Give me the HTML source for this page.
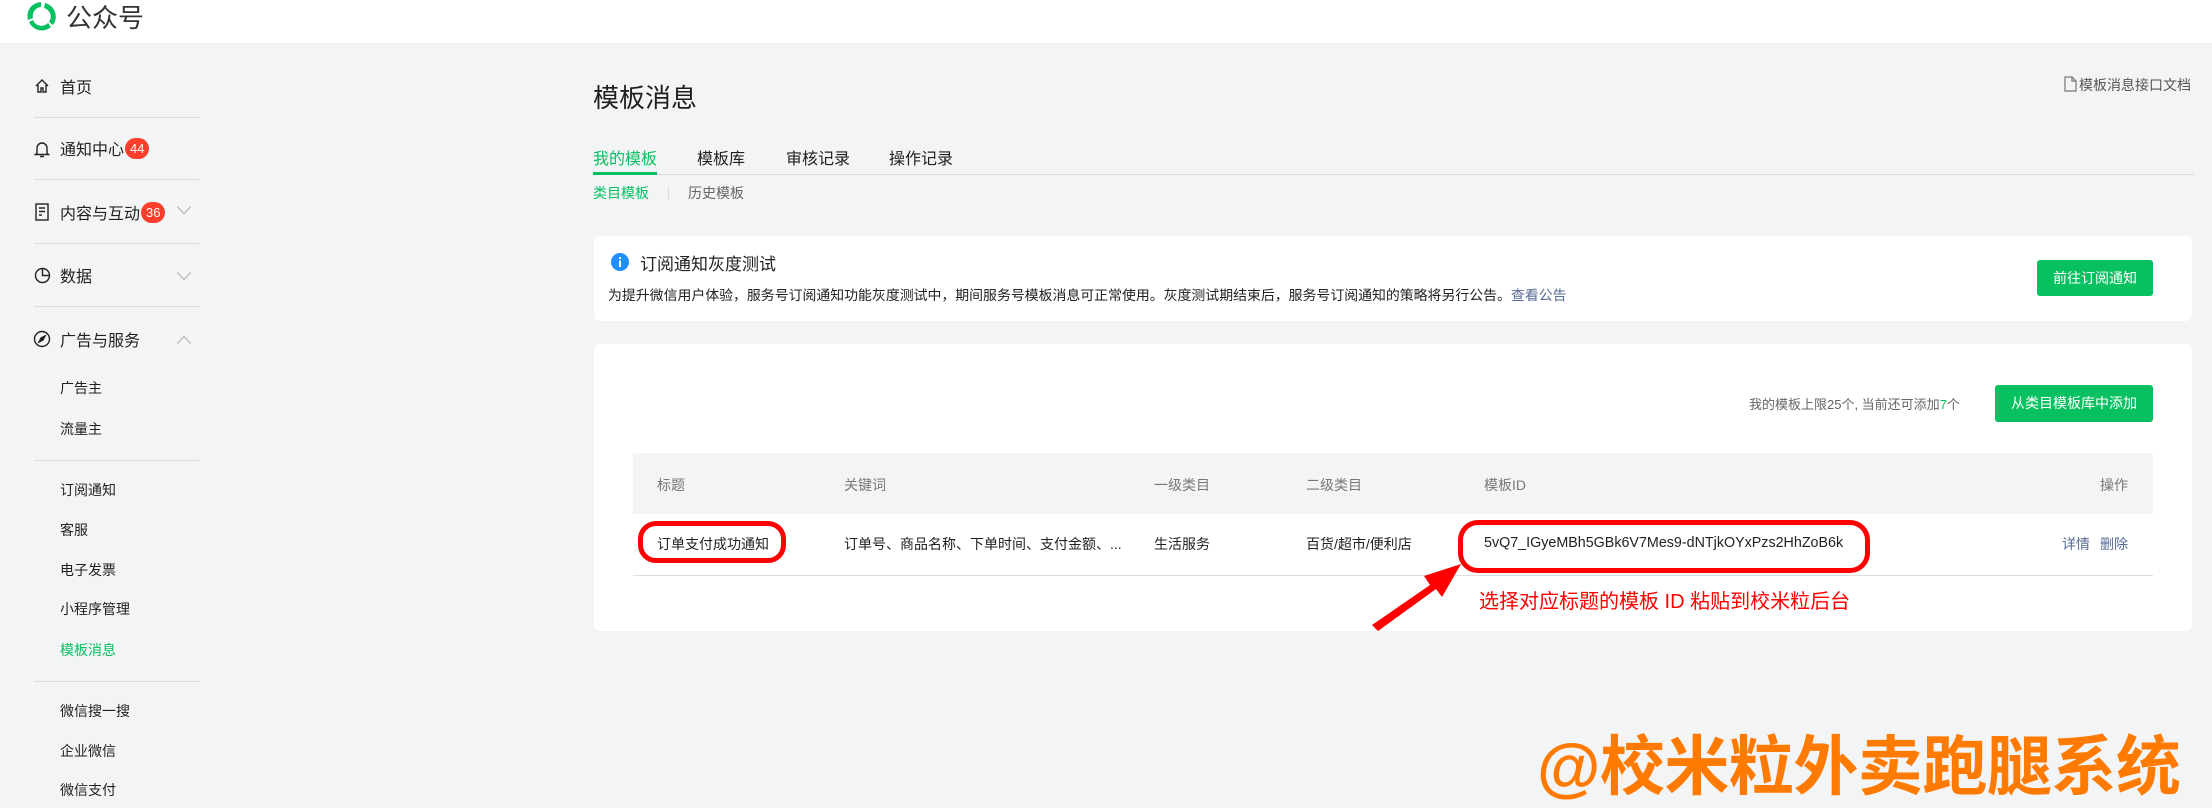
<!DOCTYPE html>
<html><head><meta charset="utf-8"><style>
*{margin:0;padding:0;box-sizing:border-box}
body{width:2212px;height:808px;overflow:hidden;background:#f3f4f6;font-family:"Liberation Sans","Noto Sans CJK SC",sans-serif;color:#1f1f1f;position:relative}
.abs{position:absolute;white-space:nowrap}
.hdr{position:absolute;left:0;top:0;width:2212px;height:43px;background:#fff}
.nav{font-size:16px;color:#222}
.sub{font-size:14px;color:#222}
.div{position:absolute;left:34px;width:165px;height:1px;background:#dcdcdc}
.badge{display:inline-block;background:#fa3e2c;color:#fff;font-size:13px;border-radius:11px;height:21px;line-height:21px;padding:0 5px;vertical-align:2px;margin-left:1px}
.chev{position:absolute;width:10px;height:10px;border-right:1px solid #aaa;border-bottom:1px solid #aaa}
.card{position:absolute;background:#fff;border-radius:6px}
.btn{position:absolute;background:#07c160;color:#fff;font-size:14px;border-radius:3px;text-align:center}
.th{font-size:14px;color:#777}
.td{font-size:14px;color:#222}
.red{position:absolute;border:5px solid #f00;border-radius:20px}
</style></head><body>
<div class="hdr"></div>
<svg class="abs" style="left:23px;top:0" width="36" height="32" viewBox="0 0 36 32">
<path d="M18 2 A14 14 0 0 0 5 20 L10 18 A9 9 0 0 1 18 7 Z" fill="#07c160"/>
<path d="M6 22 A14 14 0 0 0 28 27 L25 23 A9 9 0 0 1 10 20 Z" fill="#07c160"/>
<path d="M30 25 A14 14 0 0 0 22 3 L21 8 A9 9 0 0 1 26 22 Z" fill="#07c160"/>
</svg>
<div class="abs" style="left:66px;top:-2px;font-size:26px;color:#333">公众号</div>

<svg class="abs" style="left:34px;top:78px" width="16" height="16" viewBox="0 0 16 16" fill="none" stroke="#222" stroke-width="1.4"><path d="M2 8 L8 2 L14 8 M4 7 V14 H7 V10 H9 V14 H12 V7"/></svg>
<div class="abs nav" style="left:60px;top:74px">首页</div>
<div class="div" style="top:117px"></div>
<svg class="abs" style="left:34px;top:140px" width="16" height="18" viewBox="0 0 16 18" fill="none" stroke="#222" stroke-width="1.4"><path d="M3 13 V8 A5 5 0 0 1 13 8 V13 L14.5 14.5 H1.5 Z M6 16.5 H10"/></svg>
<div class="abs nav" style="left:60px;top:136px">通知中心<span class="badge">44</span></div>
<div class="div" style="top:179px"></div>
<svg class="abs" style="left:35px;top:203px" width="14" height="18" viewBox="0 0 14 18" fill="none" stroke="#222" stroke-width="1.4"><rect x="1" y="1" width="12" height="16"/><path d="M4 5 H10 M4 8.5 H10 M4 12 H7"/></svg>
<div class="abs nav" style="left:60px;top:200px">内容与互动<span class="badge">36</span></div>
<div class="chev" style="left:179px;top:202px;transform:rotate(45deg)"></div>
<div class="div" style="top:243px"></div>
<svg class="abs" style="left:34px;top:267px" width="17" height="17" viewBox="0 0 17 17" fill="none" stroke="#222" stroke-width="1.4"><circle cx="8.5" cy="8.5" r="7"/><path d="M8.5 1.5 V8.5 H15.5"/></svg>
<div class="abs nav" style="left:60px;top:263px">数据</div>
<div class="chev" style="left:179px;top:268px;transform:rotate(45deg)"></div>
<div class="div" style="top:306px"></div>
<svg class="abs" style="left:33px;top:330px" width="18" height="18" viewBox="0 0 18 18" fill="none" stroke="#222" stroke-width="1.4"><circle cx="9" cy="9" r="7.5"/><path d="M12 6 L8 8 L6 12 L10 10 Z" fill="#222"/></svg>
<div class="abs nav" style="left:60px;top:327px">广告与服务</div>
<div class="chev" style="left:179px;top:338px;transform:rotate(225deg)"></div>
<div class="abs sub" style="left:60px;top:378px">广告主</div>
<div class="abs sub" style="left:60px;top:419px">流量主</div>
<div class="div" style="top:460px"></div>
<div class="abs sub" style="left:60px;top:480px">订阅通知</div>
<div class="abs sub" style="left:60px;top:520px">客服</div>
<div class="abs sub" style="left:60px;top:560px">电子发票</div>
<div class="abs sub" style="left:60px;top:599px">小程序管理</div>
<div class="abs sub" style="left:60px;top:640px;color:#07c160">模板消息</div>
<div class="div" style="top:681px"></div>
<div class="abs sub" style="left:60px;top:701px">微信搜一搜</div>
<div class="abs sub" style="left:60px;top:741px">企业微信</div>
<div class="abs sub" style="left:60px;top:780px">微信支付</div>

<div class="abs" style="left:593px;top:78px;font-size:26px;color:#1f1f1f">模板消息</div>
<svg class="abs" style="left:2064px;top:76px" width="13" height="16" viewBox="0 0 13 16" fill="none" stroke="#777" stroke-width="1.2"><path d="M1 1 H8 L12 5 V15 H1 Z M8 1 V5 H12"/></svg>
<div class="abs" style="left:2079px;top:75px;font-size:14px;color:#555">模板消息接口文档</div>

<div class="abs" style="left:593px;top:145px;font-size:16px;color:#07c160">我的模板</div>
<div class="abs" style="left:697px;top:145px;font-size:16px">模板库</div>
<div class="abs" style="left:786px;top:145px;font-size:16px">审核记录</div>
<div class="abs" style="left:889px;top:145px;font-size:16px">操作记录</div>
<div class="abs" style="left:593px;top:174px;width:1601px;height:1px;background:#d9d9d9"></div>
<div class="abs" style="left:593px;top:172px;width:64px;height:3px;background:#07c160"></div>
<div class="abs" style="left:593px;top:183px;font-size:14px;color:#07c160">类目模板</div>
<div class="abs" style="left:668px;top:186px;width:1px;height:14px;background:#ddd"></div>
<div class="abs" style="left:688px;top:183px;font-size:14px;color:#666">历史模板</div>

<div class="card" style="left:594px;top:236px;width:1598px;height:85px"></div>
<svg class="abs" style="left:611px;top:253px" width="18" height="18" viewBox="0 0 18 18"><circle cx="9" cy="9" r="9" fill="#1e90ff"/><rect x="8" y="7.5" width="2" height="6.5" fill="#fff"/><rect x="8" y="4" width="2" height="2" fill="#fff"/></svg>
<div class="abs" style="left:640px;top:250px;font-size:17px;color:#222">订阅通知灰度测试</div>
<div class="abs" style="left:608px;top:285px;font-size:13.9px;color:#222">为提升微信用户体验，服务号订阅通知功能灰度测试中，期间服务号模板消息可正常使用。灰度测试期结束后，服务号订阅通知的策略将另行公告。<span style="color:#576b95">查看公告</span></div>
<div class="btn" style="left:2037px;top:260px;width:116px;height:36px;line-height:36px">前往订阅通知</div>

<div class="card" style="left:594px;top:344px;width:1598px;height:287px"></div>
<div class="abs" style="left:1749px;top:394px;font-size:13px;color:#666">我的模板上限25个, 当前还可添加<span style="color:#07c160">7</span>个</div>
<div class="btn" style="left:1995px;top:385px;width:158px;height:37px;line-height:37px">从类目模板库中添加</div>
<div class="abs" style="left:633px;top:453px;width:1520px;height:61px;background:#f3f4f6"></div>
<div class="abs th" style="left:657px;top:475px">标题</div>
<div class="abs th" style="left:844px;top:475px">关键词</div>
<div class="abs th" style="left:1154px;top:475px">一级类目</div>
<div class="abs th" style="left:1306px;top:475px">二级类目</div>
<div class="abs th" style="left:1484px;top:475px">模板ID</div>
<div class="abs th" style="left:2100px;top:475px">操作</div>
<div class="abs td" style="left:657px;top:534px">订单支付成功通知</div>
<div class="abs td" style="left:844px;top:534px">订单号、商品名称、下单时间、支付金额、...</div>
<div class="abs td" style="left:1154px;top:534px">生活服务</div>
<div class="abs td" style="left:1306px;top:534px">百货/超市/便利店</div>
<div class="abs td" style="left:1484px;top:535px;font-size:14.3px">5vQ7_IGyeMBh5GBk6V7Mes9-dNTjkOYxPzs2HhZoB6k</div>
<div class="abs td" style="left:2062px;top:534px;color:#576b95">详情</div>
<div class="abs td" style="left:2100px;top:534px;color:#576b95">删除</div>
<div class="abs" style="left:633px;top:575px;width:1520px;height:1px;background:#ddd"></div>

<div class="red" style="left:638px;top:521px;width:148px;height:42px;border-radius:18px"></div>
<div class="red" style="left:1458px;top:520px;width:412px;height:53px"></div>
<svg class="abs" style="left:1360px;top:555px" width="110" height="80" viewBox="0 0 110 80"><path d="M12 70 L70 30 L64 21 L101 9 L82 42 L76 34 L18 76 Z" fill="#f00"/></svg>
<div class="abs" style="left:1479px;top:585px;font-size:20px;color:#f00">选择对应标题的模板 ID 粘贴到校米粒后台</div>

<div class="abs" style="left:1537px;top:714px;font-size:65px;font-weight:bold;color:#ff7a00;letter-spacing:-0.5px">@校米粒外卖跑腿系统</div>
</body></html>
